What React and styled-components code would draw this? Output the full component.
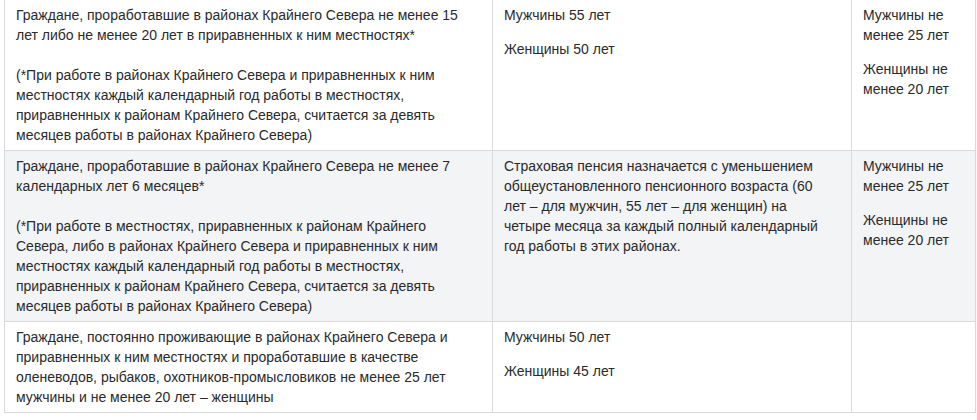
import React from "react";
import styled, { createGlobalStyle } from "styled-components";

const Global = createGlobalStyle`
  html, body { margin: 0; padding: 0; background: #ffffff; }
  body { font-family: "Liberation Sans", Arial, sans-serif; }
`;

const Wrap = styled.div`
  padding: 0 0 0 4px;
  margin-top: -1px;
`;

const Table = styled.table`
  width: 971px;
  table-layout: fixed;
  border-collapse: collapse;
  font-family: "Liberation Sans", Arial, sans-serif;
  font-size: 14px;
  line-height: 20px;
  color: #2a2a2a;
`;

const Row = styled.tr`
  background: ${(p) => (p.$shaded ? "#f3f4f6" : "#ffffff")};
`;

const Cell = styled.td`
  border: 1px solid #d9d9d9;
  padding: 5px ${(p) => p.$padRight || 11}px 5px 11px;
  vertical-align: top;
`;

const Para = styled.p`
  margin: 0 0 14px;
  &:last-child { margin-bottom: 0; }
`;

const rows = [
  {
    first: [
      "Граждане, проработавшие в районах Крайнего Севера не менее 15 лет либо не менее 20 лет в приравненных к ним местностях*",
      "(*При работе в районах Крайнего Севера и приравненных к ним местностях каждый календарный год работы в местностях, приравненных к районам Крайнего Севера, считается за девять месяцев работы в районах Крайнего Севера)",
    ],
    second: ["Мужчины 55 лет", "Женщины 50 лет"],
    third: ["Мужчины не менее 25 лет", "Женщины не менее 20 лет"],
  },
  {
    shaded: true,
    first: [
      "Граждане, проработавшие в районах Крайнего Севера не менее 7 календарных лет 6 месяцев*",
      "(*При работе в местностях, приравненных к районам Крайнего Севера, либо в районах Крайнего Севера и приравненных к ним местностях каждый календарный год работы в местностях, приравненных к районам Крайнего Севера, считается за девять месяцев работы в районах Крайнего Севера)",
    ],
    second: [
      "Страховая пенсия назначается с уменьшением общеустановленного пенсионного возраста (60 лет – для мужчин, 55 лет – для женщин) на четыре месяца за каждый полный календарный год работы в этих районах.",
    ],
    third: ["Мужчины не менее 25 лет", "Женщины не менее 20 лет"],
  },
  {
    first: [
      "Граждане, постоянно проживающие в районах Крайнего Севера и приравненных к ним местностях и проработавшие в качестве оленеводов, рыбаков, охотников-промысловиков не менее 25 лет мужчины и не менее 20 лет – женщины",
    ],
    second: ["Мужчины 50 лет", "Женщины 45 лет"],
    third: [],
  },
];

export default function App() {
  return (
    <Wrap>
      <Global />
      <Table>
        <colgroup>
          <col style={{ width: 488 }} />
          <col style={{ width: 359 }} />
          <col style={{ width: 124 }} />
        </colgroup>
        <tbody>
          {rows.map((r, i) => (
            <Row key={i} $shaded={r.shaded}>
              <Cell>
                {r.first.map((t, j) => (
                  <React.Fragment key={j}>
                    {j > 0 && (
                      <>
                        <br />
                        <br />
                      </>
                    )}
                    {t}
                  </React.Fragment>
                ))}
              </Cell>
              <Cell $padRight={22}>
                {r.second.map((t, j) => (
                  <Para key={j}>{t}</Para>
                ))}
              </Cell>
              <Cell>
                {r.third.map((t, j) => (
                  <Para key={j}>{t}</Para>
                ))}
              </Cell>
            </Row>
          ))}
        </tbody>
      </Table>
    </Wrap>
  );
}
